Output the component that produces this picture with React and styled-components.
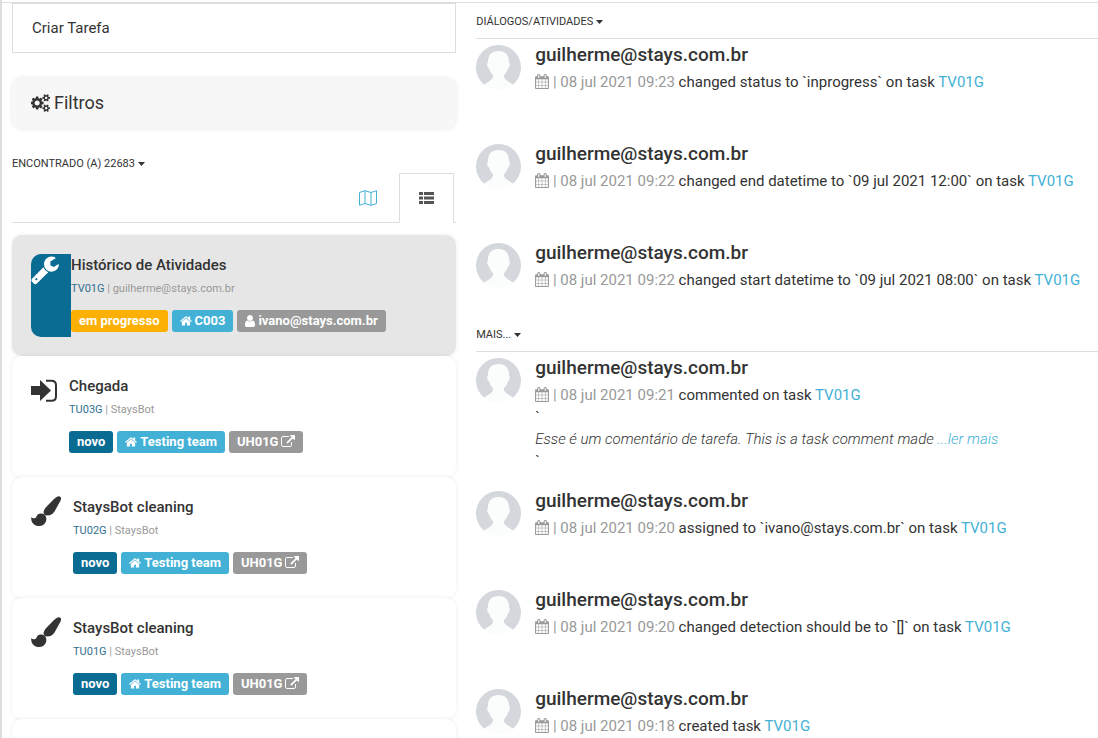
import React, { Component } from 'react';
import styled, { createGlobalStyle, css } from 'styled-components';

const textColor = '#333333';
const mutedColor = '#999999';
const lineColor = '#dddddd';
const linkColor = '#43b1d6';
const darkBlue = '#0b6c93';

const GlobalStyle = createGlobalStyle`
  * {
    box-sizing: border-box;
  }

  body {
    margin: 0;
    background-color: #FFFFFF;
    color: ${textColor};
    font-family: Roboto, sans-serif;
    font-size: 15px;
  }

  button {
    font-family: inherit;
    color: inherit;
    cursor: pointer;
  }

  a {
    color: ${linkColor};
    text-decoration: none;
  }
`;

const Wrapper = styled.div`
  height: 100vh;
  overflow: hidden;
  border-left: 2px solid ${lineColor};
  padding-top: 2px;
`;

const Columns = styled.div`
  display: grid;
  grid-template-columns: minmax(0, 5fr) minmax(0, 7fr);
  column-gap: 20px;
  padding-left: 10px;
  border-top: 1px solid ${lineColor};
`;

const SideBar = styled.aside`
  display: flex;
  flex-direction: column;
`;

const CreateBtn = styled.button`
  height: 50px;
  padding: 0 19px;
  border: 1px solid ${lineColor};
  background-color: #FFFFFF;
  font-size: 15px;
  text-align: left;
`;

const FilterBtn = styled.button`
  display: flex;
  align-items: center;
  gap: 3px;
  height: 51px;
  margin-top: 25px;
  padding: 0 19px 2px;
  border: none;
  border-radius: 10px;
  background-color: #f7f7f7;
  box-shadow: 0 0 4px rgba(0, 0, 0, 0.1);
  font-size: 18px;
`;

const MenuBtn = styled.button`
  display: flex;
  align-items: center;
  gap: 3px;
  padding: 0;
  border: none;
  background: none;
  font-size: 11px;
  line-height: 14px;
  text-transform: uppercase;
`;

const ResultBar = styled.div`
  margin-top: 28px;
`;

const Tabs = styled.div`
  display: flex;
  justify-content: flex-end;
  margin-top: 2px;
  padding-right: 2px;
  border-bottom: 1px solid ${lineColor};
`;

const Tab = styled.button`
  display: flex;
  align-items: center;
  height: 50px;
  margin-bottom: -1px;
  padding: 0 19px;
  border: 1px solid transparent;
  background: none;
  color: ${linkColor};

  ${props => props.$active && css`
    border-color: ${lineColor};
    border-bottom-color: #FFFFFF;
    background-color: #FFFFFF;
    color: #555555;
  `}

  & + & {
    margin-left: 2px;
  }
`;

const TaskList = styled.div`
  margin-top: 12px;
`;

const Task = styled.article`
  display: flex;
  padding: 19px;
  border-radius: 10px;
  background-color: ${props => (props.$selected ? '#e6e6e6' : '#FFFFFF')};
  box-shadow: 0 0 4px rgba(0, 0, 0, 0.08);
`;

const TaskIcon = styled.div`
  flex: none;
  padding-right: 12px;

  ${props => props.$selected && css`
    border-radius: 10px 0 0 10px;
    background-color: ${darkBlue};
    color: #FFFFFF;
  `}
`;

const TaskBody = styled.div`
  min-width: 0;
  padding-bottom: 5px;
`;

const TaskTitle = styled.h3`
  margin: 0;
  font-size: 15px;
  font-weight: 500;
  line-height: 22px;
`;

const TaskMeta = styled.p`
  margin: 5px 0 13px;
  color: ${mutedColor};
  font-size: 11px;
  line-height: 16px;

  > a {
    color: #31708f;
  }
`;

const Labels = styled.div`
  display: flex;
  gap: 4px;
`;

const labelColors = {
  warning: '#fcb003',
  primary: darkBlue,
  info: '#43b1d6',
  neutral: '#999999',
};

const Label = styled.span`
  display: flex;
  align-items: center;
  gap: 3px;
  height: 22px;
  padding: 0 8px;
  border-radius: 3px;
  background-color: ${props => labelColors[props.$kind]};
  color: #FFFFFF;
  font-size: 13px;
  font-weight: 700;
  line-height: 20px;
  white-space: nowrap;
`;

const Content = styled.section`
  padding-top: 12px;
`;

const FeedHeader = styled.div`
  padding-bottom: 9px;
  border-bottom: 1px solid ${lineColor};
`;

const Feed = styled.div`
  display: flex;
  flex-direction: column;
  gap: 19px;
  padding-top: 6px;

  & + ${FeedHeader} {
    margin-top: 5px;
  }
`;

const Activity = styled.article`
  display: flex;
  gap: 14px;
  min-height: 80px;
`;

const ActivityBody = styled.div`
  min-width: 0;
  line-height: 22px;
`;

const UserName = styled.h4`
  margin: 0 0 6px;
  font-size: 19px;
  font-weight: 500;
  line-height: 20px;
`;

const ActivityText = styled.p`
  margin: 0;
`;

const Stamp = styled.span`
  color: ${mutedColor};
`;

const Comment = styled.p`
  margin: 0;
  font-style: italic;
  font-weight: 300;
`;

const Svg = styled.svg`
  display: ${props => (props.$inline ? 'inline-block' : 'block')};
  flex: none;
  fill: currentColor;
  vertical-align: -2px;
`;

const Caret = () => (
  <Svg width="7" height="4" viewBox="0 0 7 4"><path d="M0 0h7L3.500 4z" /></Svg>
);

const CogsIcon = () => (
  <Svg width="20" height="18" viewBox="0 0 1920 1792">
    <path d="M832 896q0-106-75-181t-181-75-181 75-75 181 75 181 181 75 181-75 75-181zm768 512q0-52-38-90t-90-38-90 38-38 90q0 53 37.500 90.500t90.500 37.500 90.500-37.500 37.500-90.500zm0-1024q0-52-38-90t-90-38-90 38-38 90q0 53 37.500 90.500t90.500 37.500 90.500-37.500 37.500-90.500zm-384 421v185q0 10-7 19.500t-16 10.500l-155 24q-11 35-32 76 34 48 90 115 7 11 7 20 0 12-7 19-23 30-82.500 89.500t-78.500 59.500q-11 0-21-7l-115-90q-37 19-77 31-11 108-23 155-7 24-30 24h-186q-11 0-20-7.500t-10-17.500l-23-153q-34-10-75-31l-118 89q-7 7-20 7-11 0-21-8-144-133-144-160 0-9 7-19 10-14 41-53t47-61q-23-44-35-82l-152-24q-10-1-17-9.500t-7-19.500v-185q0-10 7-19.500t16-10.500l155-24q11-35 32-76-34-48-90-115-7-11-7-20 0-12 7-20 22-30 82-89t79-59q11 0 21 7l115 90q34-18 77-32 11-108 23-154 7-24 30-24h186q11 0 20 7.500t10 17.500l23 153q34 10 75 31l118-89q8-7 20-7 11 0 21 8 144 133 144 160 0 8-7 19-12 16-42 54t-45 60q23 48 34 82l152 23q10 2 17 10.500t7 19.500zm640 533v140q0 16-149 31-12 27-30 52 51 113 51 138 0 4-4 7-122 71-124 71-8 0-46-47t-52-68q-20 2-30 2t-30-2q-14 21-52 68t-46 47q-2 0-124-71-4-3-4-7 0-25 51-138-18-25-30-52-149-15-149-31v-140q0-16 149-31 13-29 30-52-51-113-51-138 0-4 4-7 4-2 35-20t59-34 30-16q8 0 46 46.500t52 67.500q20-2 30-2t30 2q51-71 92-112l6-2q4 0 124 70 4 3 4 7 0 25-51 138 17 23 30 52 149 15 149 31zm0-1024v140q0 16-149 31-12 27-30 52 51 113 51 138 0 4-4 7-122 71-124 71-8 0-46-47t-52-68q-20 2-30 2t-30-2q-14 21-52 68t-46 47q-2 0-124-71-4-3-4-7 0-25 51-138-18-25-30-52-149-15-149-31v-140q0-16 149-31 13-29 30-52-51-113-51-138 0-4 4-7 4-2 35-20t59-34 30-16q8 0 46 46.500t52 67.500q20-2 30-2t30 2q51-71 92-112l6-2q4 0 124 70 4 3 4 7 0 25-51 138 17 23 30 52 149 15 149 31z" />
  </Svg>
);

const MapIcon = () => (
  <Svg width="18" height="16" viewBox="0 0 18 16">
    <path
      d="M.5 2.500L6 .7l6 1.800L17.500.7v12.800L12 15.300l-6-1.800-5.500 1.800zM6 .7v12.800M12 2.500v12.800"
      fill="none"
      stroke="currentColor"
    />
  </Svg>
);

const ListIcon = () => (
  <Svg width="15" height="12" viewBox="0 0 15 12">
    <path d="M0 0h4v3H0zM5 0h10v3H5zM0 4.500h4v3H0zM5 4.500h10v3H5zM0 9h4v3H0zM5 9h10v3H5z" />
  </Svg>
);

const WrenchIcon = () => (
  <Svg width="28" height="31" viewBox="64 0 1664 1792">
    <path d="M448 1472q0-26-19-45t-45-19-45 19-19 45 19 45 45 19 45-19 19-45zm644-420l-682 682q-37 37-90 37-52 0-91-37l-106-108q-38-36-38-90 0-53 38-91l681-681q39 98 114.500 173.500t173.500 114.500zm634-435q0 39-23 106-47 134-164.500 217.500t-258.500 83.500q-185 0-316.500-131.500t-131.500-316.500 131.500-316.500 316.500-131.500q58 0 121.500 16.500t107.500 46.500q16 11 16 28t-16 28l-293 169v224l193 107q5-3 79-48.500t135.500-81 70.500-35.500q15 0 23.500 10t8.500 25z" />
  </Svg>
);

const SignInIcon = () => (
  <Svg width="26" height="32" viewBox="0 0 26 32">
    <path d="M0 11h9V5l11 10.500L9 26v-6H0z" />
    <path d="M15 5.800h5.500q4.500 0 4.500 4.500v10.900q0 4.500-4.500 4.500H15" fill="none" stroke="currentColor" strokeWidth="2" />
  </Svg>
);

const BrushIcon = () => (
  <Svg width="30" height="31" viewBox="0 0 30 31">
    <path d="M26 .7Q28.300-.4 29.600 1q1 1.300-.3 4L23.500 15.500q-2 3.200-4.800 3.800l-4.500.3q-2-1.600-1.500-4.300.4-2 2.500-4.300L23 3z" />
    <path d="M9 17.500q4.800-.6 6.300 4.200.5 4.200-2.500 6.700-2.600 2-6.400 1.500Q.3 29.200 0 21.300q1 .9 3 1 1.600.2 2.200-1.300Q6.300 17.900 9 17.500z" />
  </Svg>
);

const HomeIcon = () => (
  <Svg width="12" height="12" viewBox="64 64 1664 1664">
    <path d="M1472 992v480q0 26-19 45t-45 19h-384v-384h-256v384h-384q-26 0-45-19t-19-45v-480q0-1 .5-3t.5-3l575-474 575 474q1 2 1 6zm223-69l-62 74q-8 9-21 11h-3q-13 0-21-7l-692-577-692 577q-12 8-24 7-13-2-21-11l-62-74q-8-10-7-23.500t11-21.500l719-599q32-26 76-26t76 26l244 204v-195q0-14 9-23t23-9h192q14 0 23 9t9 23v408l219 182q10 8 11 21.500t-7 23.500z" />
  </Svg>
);

const UserIcon = () => (
  <Svg width="10" height="12" viewBox="256 128 1280 1536">
    <path d="M1536 1399q0 109-62.500 187t-150.500 78h-854q-88 0-150.500-78t-62.500-187q0-85 8.500-160.500t31.500-152 58.500-131 94-89 134.500-34.500q131 128 313 128t313-128q76 0 134.500 34.500t94 89 58.500 131 31.500 152 8.500 160.500zm-256-887q0 159-112.500 271.500t-271.500 112.500-271.500-112.500-112.500-271.500 112.500-271.500 271.500-112.500 271.500 112.500 112.500 271.500z" />
  </Svg>
);

const ExternalIcon = () => (
  <Svg width="14" height="14" viewBox="0 0 1792 1792">
    <path d="M1408 928v320q0 119-84.500 203.500t-203.500 84.500h-832q-119 0-203.500-84.500t-84.500-203.500v-832q0-119 84.500-203.500t203.500-84.500h704q14 0 23 9t9 23v64q0 14-9 23t-23 9h-704q-66 0-113 47t-47 113v832q0 66 47 113t113 47h832q66 0 113-47t47-113v-320q0-14 9-23t23-9h64q14 0 23 9t9 23zm384-864v512q0 26-19 45t-45 19-45-19l-176-176-652 652q-10 10-23 10t-23-10l-114-114q-10-10-10-23t10-23l652-652-176-176q-19-19-19-45t19-45 45-19h512q26 0 45 19t19 45z" />
  </Svg>
);

const CalendarIcon = () => (
  <Svg $inline width="14" height="15" viewBox="64 0 1664 1792">
    <path d="M192 1664h288v-288h-288v288zm352 0h320v-288h-320v288zm-352-352h288v-320h-288v320zm352 0h320v-320h-320v320zm-352-384h288v-288h-288v288zm736 736h320v-288h-320v288zm-384-736h320v-288h-320v288zm768 736h288v-288h-288v288zm-384-352h320v-320h-320v320zm-352-864v-288q0-13-9.500-22.500t-22.500-9.500h-64q-13 0-22.500 9.500t-9.500 22.500v288q0 13 9.500 22.500t22.500 9.500h64q13 0 22.500-9.500t9.500-22.500zm736 864h288v-320h-288v320zm-384-384h320v-288h-320v288zm384 0h288v-288h-288v288zm32-480v-288q0-13-9.500-22.500t-22.500-9.500h-64q-13 0-22.500 9.500t-9.500 22.500v288q0 13 9.500 22.500t22.500 9.500h64q13 0 22.500-9.500t9.500-22.500zm384-64v1280q0 52-38 90t-90 38h-1408q-52 0-90-38t-38-90v-1280q0-52 38-90t90-38h128v-96q0-66 47-113t113-47h64q66 0 113 47t47 113v96h384v-96q0-66 47-113t113-47h64q66 0 113 47t47 113v96h128q52 0 90 38t38 90z" />
  </Svg>
);

const AvatarIcon = () => (
  <Svg width="45" height="45" viewBox="0 0 45 45">
    <path d="M8 39.700A22.500 22.500 0 1 1 37 39.700L22.500 32z" fill="#d4d7dc" />
    <path
      d="M22.500 6c7 0 10.800 4.200 10.500 11.500 1.500.3 1 4.700-1 6-.8 3-2.300 5-4 6.700C27.600 33.700 30 35 37 39.700A22.500 22.500 0 0 1 8 39.700C15 35 17.400 33.700 17 30.200c-1.700-1.700-3.200-3.700-4-6.700-2-1.300-2.500-5.700-1-6C11.700 10.200 15.500 6 22.500 6z"
      fill="#fbfcfc"
    />
  </Svg>
);

const taskIcons = {
  wrench: WrenchIcon,
  signIn: SignInIcon,
  brush: BrushIcon,
};

const tasks = [
  { id: 'TV01G', title: 'Histórico de Atividades', owner: 'guilherme@stays.com.br', icon: 'wrench', status: 'em progresso', kind: 'warning', team: 'C003', user: 'ivano@stays.com.br', selected: true },
  { id: 'TU03G', title: 'Chegada', owner: 'StaysBot', icon: 'signIn', status: 'novo', kind: 'primary', team: 'Testing team', booking: 'UH01G' },
  { id: 'TU02G', title: 'StaysBot cleaning', owner: 'StaysBot', icon: 'brush', status: 'novo', kind: 'primary', team: 'Testing team', booking: 'UH01G' },
  { id: 'TU01G', title: 'StaysBot cleaning', owner: 'StaysBot', icon: 'brush', status: 'novo', kind: 'primary', team: 'Testing team', booking: 'UH01G' },
  { id: 'next', icon: 'brush' },
];

const dialogs = [
  { time: '09:23', text: 'changed status to `inprogress` on task' },
  { time: '09:22', text: 'changed end datetime to `09 jul 2021 12:00` on task' },
  { time: '09:22', text: 'changed start datetime to `09 jul 2021 08:00` on task' },
];

const more = [
  { time: '09:21', text: 'commented on task', comment: 'Esse é um comentário de tarefa. This is a task comment made' },
  { time: '09:20', text: 'assigned to `ivano@stays.com.br` on task' },
  { time: '09:20', text: 'changed detection should be to `[]` on task' },
  { time: '09:18', text: 'created task' },
];

const TaskCard = ({ task }) => {
  const Icon = taskIcons[task.icon];
  return (
    <Task $selected={task.selected}>
      <TaskIcon $selected={task.selected}><Icon /></TaskIcon>
      {task.title && (
        <TaskBody>
          <TaskTitle>{task.title}</TaskTitle>
          <TaskMeta><a href={`#${task.id}`}>{task.id}</a> | {task.owner}</TaskMeta>
          <Labels>
            <Label $kind={task.kind}>{task.status}</Label>
            <Label $kind="info"><HomeIcon />{task.team}</Label>
            {task.user && <Label $kind="neutral"><UserIcon />{task.user}</Label>}
            {task.booking && <Label $kind="neutral">{task.booking}<ExternalIcon /></Label>}
          </Labels>
        </TaskBody>
      )}
    </Task>
  );
};

const ActivityItem = ({ item }) => (
  <Activity>
    <AvatarIcon />
    <ActivityBody>
      <UserName>guilherme@stays.com.br</UserName>
      <ActivityText>
        <Stamp><CalendarIcon /> | 08 jul 2021 {item.time}</Stamp> {item.text} <a href="#TV01G">TV01G</a>
      </ActivityText>
      {item.comment && (
        <div>
          `
          <Comment>{item.comment} <a href="#more">...ler mais</a></Comment>
          `
        </div>
      )}
    </ActivityBody>
  </Activity>
);

class App extends Component {
  render() {
    return (
      <Wrapper>
        <GlobalStyle />
        <Columns>
          <SideBar>
            <CreateBtn>Criar Tarefa</CreateBtn>
            <FilterBtn><CogsIcon />Filtros</FilterBtn>
            <ResultBar>
              <MenuBtn>Encontrado (a) 22683 <Caret /></MenuBtn>
            </ResultBar>
            <Tabs>
              <Tab aria-label="Mapa"><MapIcon /></Tab>
              <Tab $active aria-label="Lista"><ListIcon /></Tab>
            </Tabs>
            <TaskList>
              {tasks.map(task => <TaskCard key={task.id} task={task} />)}
            </TaskList>
          </SideBar>
          <Content>
            <FeedHeader>
              <MenuBtn>Diálogos/Atividades <Caret /></MenuBtn>
            </FeedHeader>
            <Feed>
              {dialogs.map((item, i) => <ActivityItem key={i} item={item} />)}
            </Feed>
            <FeedHeader>
              <MenuBtn>Mais... <Caret /></MenuBtn>
            </FeedHeader>
            <Feed>
              {more.map((item, i) => <ActivityItem key={i} item={item} />)}
            </Feed>
          </Content>
        </Columns>
      </Wrapper>
    );
  }
}

export default App;
